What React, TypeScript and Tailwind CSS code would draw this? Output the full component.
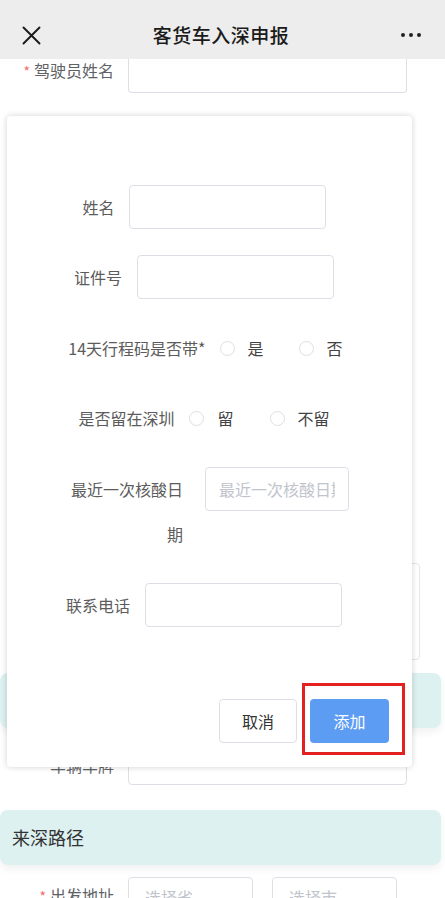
import { useState } from "react";

const BgRow = ({
	label,
	required,
	className = "",
}: {
	label: string;
	required?: boolean;
	className?: string;
}) => (
	<div className={`flex items-center ${className}`}>
		<label className="w-[114px] shrink-0 text-right text-[16px] text-[#606266]">
			{required && <span className="mr-[4px] text-[14px] text-[#f56c6c]">*</span>}
			{label}
		</label>
		<div className="ml-[14px] h-[40px] w-[279px] rounded-[4px] border border-[#dcdfe6] bg-white" />
	</div>
);

const Radio = ({ label, checked, onClick, gap }: any) => (
	<button type="button" onClick={onClick} className={`flex items-center ${gap}`}>
		<span
			className={`h-[15px] w-[15px] rounded-full border ${
				checked ? "border-[4px] border-[#409eff]" : "border-[#dcdfe6]"
			}`}
		/>
		<span className="ml-[13px] text-[16px] text-[#444]">{label}</span>
	</button>
);

const App = () => {
	const [trip, setTrip] = useState("");
	const [stay, setStay] = useState("");

	return (
		<div className="relative h-[898px] w-full overflow-hidden bg-white font-['Noto_Sans_CJK_SC',sans-serif]">
			{/* top bar */}
			<div className="flex h-[59px] items-center justify-between bg-[#ededed] px-[22px] pt-[11px]">
				<svg width="19" height="19" viewBox="0 0 19 19" className="text-[#1a1a1a]">
					<path d="M1.5 1.5L17.5 17.5M17.5 1.5L1.5 17.5" stroke="currentColor" strokeWidth="1.9" strokeLinecap="round" />
				</svg>
				<h1 className="text-[19px] font-medium tracking-[0.5px] text-[#1b1b1b]">客货车入深申报</h1>
				<div className="flex items-center gap-[4px] pr-[2px]">
					<span className="h-[4px] w-[4px] rounded-full bg-[#222]" />
					<span className="h-[4px] w-[4px] rounded-full bg-[#222]" />
					<span className="h-[4px] w-[4px] rounded-full bg-[#222]" />
				</div>
			</div>

			{/* page form behind the dialog */}
			<div className="flex items-start">
				<label className="w-[114px] shrink-0 text-right text-[16px] leading-[22px] text-[#606266]">
					<span className="mr-[4px] text-[14px] text-[#f56c6c]">*</span>
					驾驶员姓名
				</label>
				<div className="ml-[14px] h-[34px] w-[279px] rounded-b-[4px] border border-t-0 border-[#dcdfe6]" />
			</div>
			<BgRow label="证件号码" required className="mt-[30px]" />
			<BgRow label="联系电话" required className="mt-[30px]" />
			<BgRow label="车牌号码" required className="mt-[30px]" />
			<BgRow label="车辆类型" required className="mt-[30px]" />
			<BgRow label="核载人数" className="mt-[30px]" />
			<BgRow label="实载人数" className="mt-[30px]" />
			<div className="ml-[20px] mr-[25px] mt-[50px] h-[97px] rounded-[4px] border border-[#e4e7ed] bg-white" />
			<div className="mr-[4px] mt-[13px] flex h-[55px] items-center rounded-[8px] bg-[#dcf1f0] px-[12px] text-[18px] text-[#333] shadow-[0_4px_8px_rgba(0,0,0,0.06)]">
				随车人员
			</div>
			<BgRow label="车辆车牌" className="mt-[17px]" />
			<div className="mr-[4px] mt-[25px] flex h-[55px] items-center rounded-[8px] bg-[#dcf1f0] px-[12px] text-[18px] text-[#333] shadow-[0_4px_8px_rgba(0,0,0,0.06)]">
				来深路径
			</div>
			<div className="mt-[12px] flex items-start">
				<label className="w-[114px] shrink-0 pt-[6px] text-right text-[16px] text-[#606266]">
					<span className="mr-[4px] text-[14px] text-[#f56c6c]">*</span>
					出发地址
				</label>
				<div className="ml-[14px] flex h-[40px] w-[125px] items-center rounded-[4px] border border-[#dcdfe6] px-[16px] text-[16px] text-[#c0c4cc]">
					选择省
				</div>
				<div className="ml-[19px] flex h-[40px] w-[125px] items-center rounded-[4px] border border-[#dcdfe6] px-[16px] text-[16px] text-[#c0c4cc]">
					选择市
				</div>
			</div>

			{/* dialog */}
			<div className="absolute left-[7px] top-[116px] w-[405px] rounded-[4px] bg-white pb-[24px] pr-[11px] pt-[69px] shadow-[0_0_6px_rgba(0,0,0,0.18)]">
				<div className="flex h-[44px] items-center justify-center">
					<span className="text-[16px] text-[#5c5c5c]">姓名</span>
					<input className="ml-[14px] h-[44px] w-[197px] rounded-[4px] border border-[#dcdfe6] px-[13px] outline-none" />
				</div>
				<div className="mt-[26px] flex h-[44px] items-center justify-center">
					<span className="text-[16px] text-[#5c5c5c]">证件号</span>
					<input className="ml-[15px] h-[44px] w-[197px] rounded-[4px] border border-[#dcdfe6] px-[13px] outline-none" />
				</div>
				<div className="mt-[27px] flex h-[44px] items-center justify-center pl-[3px]">
					<span className="text-[16px] text-[#5c5c5c]">14天行程码是否带*</span>
					<Radio label="是" gap="ml-[14px]" checked={trip === "y"} onClick={() => setTrip("y")} />
					<Radio label="否" gap="ml-[35px]" checked={trip === "n"} onClick={() => setTrip("n")} />
				</div>
				<div className="mt-[26px] flex h-[44px] items-center justify-center">
					<span className="text-[16px] text-[#5c5c5c]">是否留在深圳</span>
					<Radio label="留" gap="ml-[15px]" checked={stay === "y"} onClick={() => setStay("y")} />
					<Radio label="不留" gap="ml-[36px]" checked={stay === "n"} onClick={() => setStay("n")} />
				</div>
				<div className="mt-[27px] flex items-start justify-center pl-[10px]">
					<span className="w-[114px] text-right text-[16px] leading-[45px] text-[#5c5c5c]">最近一次核酸日期</span>
					<div className="ml-[22px] flex h-[44px] w-[144px] items-center rounded-[4px] border border-[#dcdfe6] px-[13px]">
						<div className="w-full overflow-hidden whitespace-nowrap text-[16px] text-[#c0c4cc]">最近一次核酸日期</div>
					</div>
				</div>
				<div className="mt-[26px] flex h-[44px] items-center justify-center">
					<span className="text-[16px] text-[#5c5c5c]">联系电话</span>
					<input className="ml-[15px] h-[44px] w-[197px] rounded-[4px] border border-[#dcdfe6] px-[13px] outline-none" />
				</div>
				<div className="mt-[72px] flex justify-end gap-[13px] pr-[12px]">
					<button className="h-[44px] w-[78px] rounded-[4px] border border-[#dcdfe6] bg-white text-[16px] text-[#333]">
						取消
					</button>
					<div className="relative">
						<button className="h-[44px] w-[79px] rounded-[4px] bg-[#5c9cf2] text-[16px] text-white">添加</button>
						<div className="pointer-events-none absolute -bottom-[12px] -left-[8px] -right-[16px] -top-[16px] border-[3px] border-[#e3211f]" />
					</div>
				</div>
			</div>
		</div>
	);
};

export default App;
